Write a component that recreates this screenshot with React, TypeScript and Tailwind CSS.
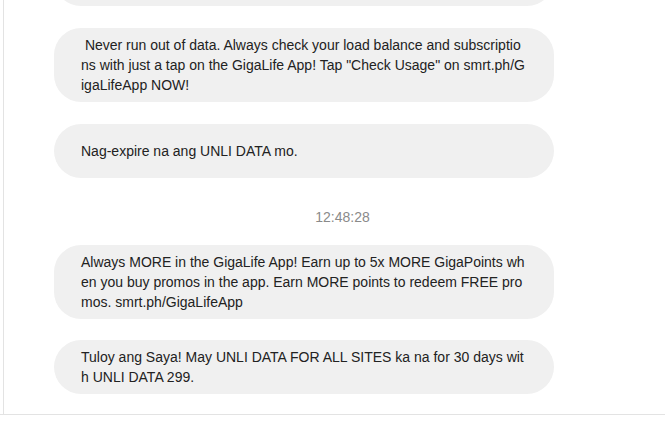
const messages = [
    { id: 1, text: "\u00a0Never run out of data. Always check your load balance and subscriptions with just a tap on the GigaLife App! Tap \"Check Usage\" on smrt.ph/GigaLifeApp NOW!" },
    { id: 2, text: "Nag-expire na ang UNLI DATA mo." },
];

const laterMessages = [
    { id: 3, text: "Always MORE in the GigaLife App! Earn up to 5x MORE GigaPoints when you buy promos in the app. Earn MORE points to redeem FREE promos. smrt.ph/GigaLifeApp" },
    { id: 4, text: "Tuloy ang Saya! May UNLI DATA FOR ALL SITES ka na for 30 days with UNLI DATA 299." },
];

const Bubble = ({ text, className = "" }: { text: string; className?: string }) => (
    <div
        className={`ml-[50px] w-[500px] min-h-[54px] shrink-0 flex items-center rounded-[27px] bg-[#f0f0f0] px-[27px] py-[7px] ${className}`}
    >
        <p className="w-full break-all text-[14px] leading-[20px] text-[#222222]">{text}</p>
    </div>
);

const App = () => {
    return (
        <div className="w-[665px] h-[421px] bg-white flex flex-col font-['Liberation_Sans',Arial,sans-serif] overflow-hidden">
            <div className="ml-[3px] flex-1 min-h-0 border-l border-[#e3e3e3] flex flex-col justify-end overflow-hidden pb-[20px]">
                <Bubble text="Nag-expire na ang UNLI DATA mo." className="shrink-0" />
                {messages.map(({ id, text }) => (
                    <Bubble key={id} text={text} className="mt-[22px]" />
                ))}
                <div className="mt-[29px] mb-[18px] shrink-0 pl-[16px] text-center text-[14px] leading-[20px] text-[#8a8a8a]">
                    12:48:28
                </div>
                {laterMessages.map(({ id, text }, index) => (
                    <Bubble key={id} text={text} className={index ? "mt-[21px]" : ""} />
                ))}
            </div>
            <div className="h-[7px] shrink-0 border-t border-[#e3e3e3]" />
        </div>
    );
};

export default App;
